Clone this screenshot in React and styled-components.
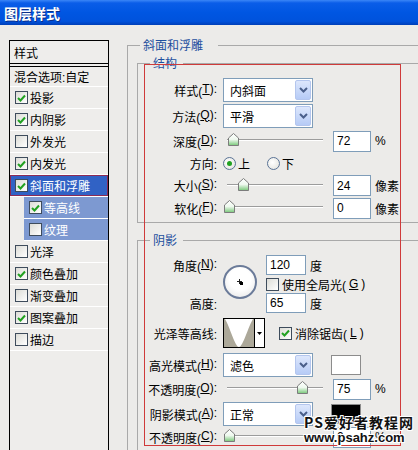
import styled, { createGlobalStyle } from 'styled-components'

const FONT = `"Liberation Sans", "Noto Sans CJK SC", sans-serif`

const GlobalStyle = createGlobalStyle`
    body {
        margin: 0;
        background: #ecebe9;
    }
    * {
        box-sizing: border-box;
    }
`

const Window = styled.div`
    position: relative;
    width: 418px;
    height: 450px;
    overflow: hidden;
    background: #ecebe9;
    font-family: ${FONT};
    font-size: 12px;
    color: #000;
`

const TitleBar = styled.div`
    height: 25px;
    padding-left: 4px;
    display: flex;
    align-items: center;
    background: linear-gradient(
        #3b86f7 0%,
        #0a5de8 12%,
        #0056e2 50%,
        #0052dc 85%,
        #003fb8 100%
    );
    color: #fff;
    font-family: "Noto Sans CJK SC", sans-serif;
    font-weight: bold;
    font-size: 14px;
    text-shadow: 1px 1px 0 #0a2f8a;
`

const Body = styled.div`
    display: flex;
    align-items: flex-start;
`

/* ---------- left list ---------- */

const StylePanel = styled.div`
    flex-shrink: 0;
    width: 100px;
    height: 440px;
    margin: 15px 0 0 9px;
    border: 1px solid #000;
    background: #eeedeb;
`

const PanelHeader = styled.div`
    height: 26px;
    padding-left: 4px;
    display: flex;
    align-items: center;
    border-bottom: 4px double #000;
`

const ListRow = styled.div`
    height: ${(p) => p.$h || 22}px;
    margin-left: ${(p) => (p.$sub ? 14 : 0)}px;
    padding-left: ${(p) => (p.$plain ? 4 : 5)}px;
    display: flex;
    align-items: center;
    gap: 2px;
    border-bottom: 1px solid #fff;
    white-space: nowrap;
    color: ${(p) => (p.$selected || p.$sub ? '#fff' : '#000')};
    background: ${(p) =>
        p.$selected ? '#3162c5' : p.$sub ? '#7d99d1' : 'transparent'};
    box-shadow: ${(p) => (p.$selected ? 'inset 0 0 0 1px #8c2b55' : 'none')};
`

const CheckBox = styled.span`
    flex-shrink: 0;
    width: 13px;
    height: 13px;
    border: 1px solid #3e4c5c;
    background: linear-gradient(135deg, #dcdcd6, #ffffff);
    display: flex;
    align-items: center;
    justify-content: center;
`

const Check = ({ on }) => (
    <CheckBox>
        {on && (
            <svg width="9" height="8" viewBox="0 0 9 8">
                <path
                    d="M1 4 L3.5 6.5 L8 1.5"
                    fill="none"
                    stroke="#21a121"
                    strokeWidth="2"
                />
            </svg>
        )}
    </CheckBox>
)

/* ---------- right settings ---------- */

const Outer = styled.fieldset`
    flex-shrink: 0;
    width: 330px;
    min-width: 0;
    margin: 12px 0 0 18px;
    padding: 0 0 0 9px;
    border: 1px solid #a9a9a9;
`

const Group = styled.fieldset`
    width: 300px;
    min-width: 0;
    margin: ${(p) => p.$mt}px 0 0 0;
    padding: 0 0 3px 12px;
    border: 1px solid #a9a9a9;
`

const Legend = styled.legend`
    margin-left: ${(p) => (p.$outer ? 3 : 0)}px;
    padding: 0 ${(p) => (p.$outer ? 15 : 6)}px 0 3px;
    font-family: "Noto Sans CJK SC", sans-serif;
    font-size: 12px;
    line-height: 16px;
    color: #1d4f9e;
`

const Row = styled.div`
    height: ${(p) => p.$h}px;
    margin-top: ${(p) => p.$mt || 0}px;
    display: flex;
    align-items: center;
`

const Label = styled.span`
    flex-shrink: 0;
    width: 67px;
    margin-right: 6px;
    display: flex;
    justify-content: flex-end;
    white-space: nowrap;
`

const SelectBox = styled.div`
    width: 90px;
    height: 24px;
    padding: 1px 1px 1px 6px;
    border: 1px solid #7f9db9;
    background: #fff;
    display: flex;
    align-items: center;
    justify-content: space-between;
    font-family: "Noto Sans CJK SC", sans-serif;
`

const SelectButton = styled.span`
    width: 16px;
    height: 20px;
    border: 1px solid #b4c6ee;
    border-radius: 2px;
    background: linear-gradient(#dde7fc, #b6cbf6);
    display: flex;
    align-items: center;
    justify-content: center;
`

const Select = ({ value }) => (
    <SelectBox>
        {value}
        <SelectButton>
            <svg width="9" height="6" viewBox="0 0 9 6">
                <path
                    d="M1 1 L4.5 4.5 L8 1"
                    fill="none"
                    stroke="#4a5f8a"
                    strokeWidth="2"
                />
            </svg>
        </SelectButton>
    </SelectBox>
)

const Field = styled.span`
    width: ${(p) => p.$w || 38}px;
    height: ${(p) => p.$hh || 21}px;
    margin-left: ${(p) => p.$ml || 0}px;
    padding-left: 3px;
    border: 1px solid #7f9db9;
    background: #fff;
    display: flex;
    align-items: center;
`

const Unit = styled.span`
    margin-left: 4px;
    white-space: nowrap;
`

const SliderBox = styled.div`
    position: relative;
    width: 100px;
    height: 100%;
`

const Track = styled.div`
    position: absolute;
    left: 4px;
    right: 0;
    top: 50%;
    margin-top: -2px;
    height: 2px;
    border-top: 1px solid #9c9c9c;
    border-bottom: 1px solid #fff;
`

const Thumb = styled.svg`
    position: absolute;
    left: ${(p) => p.$left}px;
    top: 50%;
    margin-top: -8px;
`

const Slider = ({ at }) => (
    <SliderBox>
        <Track />
        <Thumb $left={at} width="11" height="13" viewBox="0 0 11 13">
            <defs>
                <linearGradient id="thumbFill" x1="0" y1="0" x2="0" y2="1">
                    <stop offset="0" stopColor="#ffffff" />
                    <stop offset="0.5" stopColor="#eef8ee" />
                    <stop offset="1" stopColor="#78c878" />
                </linearGradient>
            </defs>
            <path
                d="M5.5 0.5 L10.5 5 V12.5 H0.5 V5 Z"
                fill="url(#thumbFill)"
                stroke="#7c7c7c"
            />
        </Thumb>
    </SliderBox>
)

const RadioDot = styled.span`
    width: 13px;
    height: 13px;
    margin-left: ${(p) => p.$ml || 0}px;
    margin-right: 2px;
    border: 1px solid #5a7396;
    border-radius: 50%;
    background: radial-gradient(circle at 40% 40%, #fff, #e0e0da);
    display: flex;
    align-items: center;
    justify-content: center;

    &::after {
        content: '';
        width: 5px;
        height: 5px;
        border-radius: 50%;
        background: ${(p) => (p.$on ? '#21a121' : 'transparent')};
    }
`

const AngleGrid = styled.div`
    margin-top: 7px;
    display: grid;
    grid-template-columns: 73px 43px auto;
    grid-template-rows: 20px 18px 20px;
    align-items: center;
`

const Dial = styled.div`
    grid-column: 2;
    grid-row: 1 / 4;
    width: 34px;
    height: 34px;
    margin-top: -4px;
    border: 2px solid #6b7b99;
    border-radius: 50%;
    background: radial-gradient(circle at 50% 40%, #ffffff 45%, #e2e2e2 100%);
    display: flex;
    align-items: center;
    justify-content: center;
`

const Cell = styled.div`
    grid-column: 3;
    display: flex;
    align-items: center;
    gap: ${(p) => p.$gap || 0}px;
    white-space: nowrap;
`

const ContourPicker = styled.div`
    width: 42px;
    height: 30px;
    border: 1px solid #000;
    background: #fff;
    display: flex;
`

const ContourArrow = styled.span`
    flex: 1;
    border-left: 1px solid #000;
    display: flex;
    align-items: center;
    justify-content: center;
`

const CheckLabel = styled.span`
    margin-left: ${(p) => p.$ml || 0}px;
    display: flex;
    align-items: center;
    gap: 3px;
    white-space: nowrap;
`

const Swatch = styled.span`
    width: 30px;
    height: 20px;
    margin-left: 18px;
    border: 1px solid #8c8c8c;
    background: ${(p) => p.$color};
`

/* ---------- overlays ---------- */

const Highlight = styled.div`
    position: absolute;
    left: 144px;
    top: 64px;
    width: 257px;
    height: 382px;
    border: 1px solid #cf3a3a;
    pointer-events: none;
`

const Watermark = styled.div`
    position: absolute;
    left: 304px;
    top: 414px;
    font-weight: bold;
    color: #111;
    text-shadow: -1px -1px 0 #fff, 1px -1px 0 #fff, -1px 1px 0 #fff,
        1px 1px 0 #fff, 0 1px 0 #fff, 0 -1px 0 #fff;
`

const WatermarkLine = styled.div`
    font-family: ${(p) => (p.$cjk ? '"Noto Sans CJK SC", sans-serif' : FONT)};
    font-size: ${(p) => (p.$cjk ? 14 : 13)}px;
    line-height: ${(p) => (p.$cjk ? 17 : 14)}px;
    letter-spacing: ${(p) => (p.$cjk ? 1 : 0)}px;
`

const layers = [
    { name: '投影', on: true },
    { name: '内阴影', on: true },
    { name: '外发光', on: false },
    { name: '内发光', on: true },
    { name: '斜面和浮雕', on: true, selected: true },
    { name: '等高线', on: true, sub: true },
    { name: '纹理', on: false, sub: true },
    { name: '光泽', on: false },
    { name: '颜色叠加', on: true },
    { name: '渐变叠加', on: false },
    { name: '图案叠加', on: true },
    { name: '描边', on: false },
]

const Mnemonic = ({ text, k }) => (
    <>
        {text}(<u>{k}</u>):
    </>
)

const App = () => {
    return (
        <Window>
            <GlobalStyle />
            <TitleBar>图层样式</TitleBar>
            <Body>
                <StylePanel>
                    <PanelHeader>样式</PanelHeader>
                    <ListRow $plain $h={20}>
                        混合选项:自定
                    </ListRow>
                    {layers.map((layer) => (
                        <ListRow
                            key={layer.name}
                            $selected={layer.selected}
                            $sub={layer.sub}
                        >
                            <Check on={layer.on} />
                            {layer.name}
                        </ListRow>
                    ))}
                </StylePanel>

                <Outer>
                    <Legend $outer>斜面和浮雕</Legend>
                    <Group $mt={2}>
                        <Legend>结构</Legend>
                        <Row $h={24} $mt={7}>
                            <Label>
                                <Mnemonic text="样式" k="T" />
                            </Label>
                            <Select value="内斜面" />
                        </Row>
                        <Row $h={24} $mt={2}>
                            <Label>
                                <Mnemonic text="方法" k="Q" />
                            </Label>
                            <Select value="平滑" />
                        </Row>
                        <Row $h={22} $mt={2}>
                            <Label>
                                <Mnemonic text="深度" k="D" />
                            </Label>
                            <Slider at={5} />
                            <Field $ml={10}>72</Field>
                            <Unit>%</Unit>
                        </Row>
                        <Row $h={22}>
                            <Label>方向:</Label>
                            <RadioDot $on />上
                            <RadioDot $ml={17} />下
                        </Row>
                        <Row $h={23}>
                            <Label>
                                <Mnemonic text="大小" k="S" />
                            </Label>
                            <Slider at={15} />
                            <Field $ml={10}>24</Field>
                            <Unit>像素</Unit>
                        </Row>
                        <Row $h={22}>
                            <Label>
                                <Mnemonic text="软化" k="F" />
                            </Label>
                            <Slider at={1} />
                            <Field $ml={10}>0</Field>
                            <Unit>像素</Unit>
                        </Row>
                    </Group>

                    <Group $mt={9}>
                        <Legend>阴影</Legend>
                        <AngleGrid>
                            <Label>
                                <Mnemonic text="角度" k="N" />
                            </Label>
                            <Dial>
                                <svg width="9" height="9" viewBox="0 0 9 9">
                                    <path
                                        d="M1 3.5 H6 M3.5 1 V6"
                                        stroke="#222"
                                        strokeWidth="1"
                                    />
                                    <rect x="4" y="4" width="3" height="3" fill="#000" />
                                </svg>
                            </Dial>
                            <Cell>
                                <Field $w={40} $hh={20}>
                                    120
                                </Field>
                                <Unit>度</Unit>
                            </Cell>
                            <Cell $gap={3}>
                                <Check on={false} />
                                使用全局光(<u>G</u>)
                            </Cell>
                            <Label>高度:</Label>
                            <Cell>
                                <Field $w={40} $hh={20}>
                                    65
                                </Field>
                                <Unit>度</Unit>
                            </Cell>
                        </AngleGrid>
                        <Row $h={30} $mt={5}>
                            <Label>光泽等高线:</Label>
                            <ContourPicker>
                                <svg width="30" height="28" viewBox="0 0 30 28">
                                    <rect width="30" height="28" fill="#aca899" />
                                    <path
                                        d="M1 0 C6 8 11 28 15 28 C19 28 24 8 29 0 Z"
                                        fill="#fff"
                                    />
                                </svg>
                                <ContourArrow>
                                    <svg width="5" height="3" viewBox="0 0 5 3">
                                        <path d="M0 0 H5 L2.5 3 Z" fill="#000" />
                                    </svg>
                                </ContourArrow>
                            </ContourPicker>
                            <CheckLabel $ml={14}>
                                <Check on />
                                消除锯齿(<u>L</u>)
                            </CheckLabel>
                        </Row>
                        <Row $h={24} $mt={5}>
                            <Label>
                                <Mnemonic text="高光模式" k="H" />
                            </Label>
                            <Select value="滤色" />
                            <Swatch $color="#fff" />
                        </Row>
                        <Row $h={22} $mt={1}>
                            <Label>
                                <Mnemonic text="不透明度" k="O" />
                            </Label>
                            <Slider at={74} />
                            <Field $ml={10}>75</Field>
                            <Unit>%</Unit>
                        </Row>
                        <Row $h={24} $mt={2}>
                            <Label>
                                <Mnemonic text="阴影模式" k="A" />
                            </Label>
                            <Select value="正常" />
                            <Swatch $color="#000" />
                        </Row>
                        <Row $h={22}>
                            <Label>
                                <Mnemonic text="不透明度" k="C" />
                            </Label>
                            <Slider at={1} />
                            <Field $ml={10}>0</Field>
                            <Unit>%</Unit>
                        </Row>
                    </Group>
                </Outer>
            </Body>

            <Highlight />
            <Watermark>
                <WatermarkLine $cjk>PS爱好者教程网</WatermarkLine>
                <WatermarkLine>www.psahz.com</WatermarkLine>
            </Watermark>
        </Window>
    )
}

export default App
